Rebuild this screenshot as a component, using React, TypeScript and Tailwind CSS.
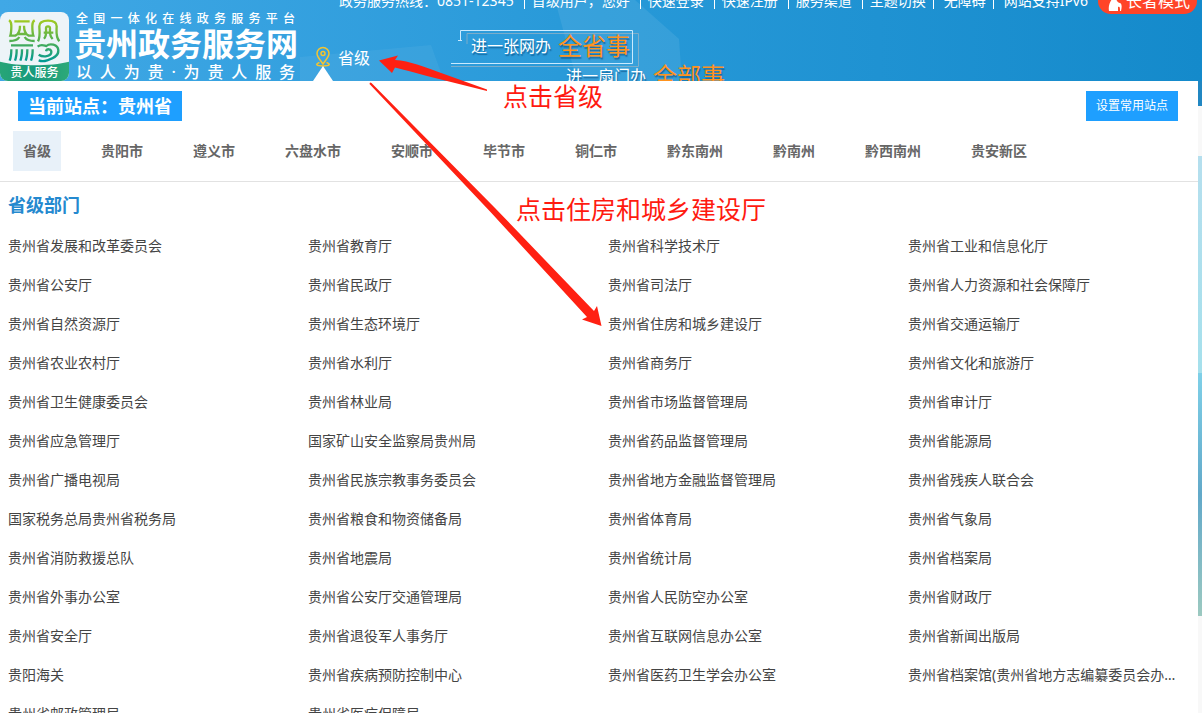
import React, { useState } from 'react';
import clsx from 'clsx';

interface NavItem {
    label: string;
    divider: string;
}

const navItems: NavItem[] = [
    { label: '政务服务热线：0851-12345', divider: 'ml-[10px] mr-[7px]' },
    { label: '首级用户，您好', divider: 'ml-[10px] mr-[7px]' },
    { label: '快速登录', divider: 'ml-[10px] mr-[7px]' },
    { label: '快速注册', divider: 'ml-[10px] mr-[7px]' },
    { label: '服务渠道', divider: 'ml-[10px] mr-[7px]' },
    { label: '主题切换', divider: 'ml-[7px] mr-[10px]' },
    { label: '无障碍', divider: 'ml-[7px] mr-[10px]' },
];

const regions = ['省级', '贵阳市', '遵义市', '六盘水市', '安顺市', '毕节市', '铜仁市', '黔东南州', '黔南州', '黔西南州', '贵安新区'];

const departments = [
    '贵州省发展和改革委员会', '贵州省教育厅', '贵州省科学技术厅', '贵州省工业和信息化厅',
    '贵州省公安厅', '贵州省民政厅', '贵州省司法厅', '贵州省人力资源和社会保障厅',
    '贵州省自然资源厅', '贵州省生态环境厅', '贵州省住房和城乡建设厅', '贵州省交通运输厅',
    '贵州省农业农村厅', '贵州省水利厅', '贵州省商务厅', '贵州省文化和旅游厅',
    '贵州省卫生健康委员会', '贵州省林业局', '贵州省市场监督管理局', '贵州省审计厅',
    '贵州省应急管理厅', '国家矿山安全监察局贵州局', '贵州省药品监督管理局', '贵州省能源局',
    '贵州省广播电视局', '贵州省民族宗教事务委员会', '贵州省地方金融监督管理局', '贵州省残疾人联合会',
    '国家税务总局贵州省税务局', '贵州省粮食和物资储备局', '贵州省体育局', '贵州省气象局',
    '贵州省消防救援总队', '贵州省地震局', '贵州省统计局', '贵州省档案局',
    '贵州省外事办公室', '贵州省公安厅交通管理局', '贵州省人民防空办公室', '贵州省财政厅',
    '贵州省安全厅', '贵州省退役军人事务厅', '贵州省互联网信息办公室', '贵州省新闻出版局',
    '贵阳海关', '贵州省疾病预防控制中心', '贵州省医药卫生学会办公室', '贵州省档案馆(贵州省地方志编纂委员会办公室)',
    '贵州省邮政管理局', '贵州省医疗保障局',
];

function Logo() {
    return (
        <div className="relative h-[69px] w-[69px] shrink-0 overflow-hidden rounded-lg bg-[#edf4f8]">
            <svg viewBox="0 0 207 207" className="h-full w-full" fill="none" aria-hidden="true">
                <defs>
                    <linearGradient id="mark" x1="0" y1="20" x2="0" y2="148" gradientUnits="userSpaceOnUse">
                        <stop offset="0" stopColor="#a6cc1f" />
                        <stop offset="0.5" stopColor="#55b04f" />
                        <stop offset="1" stopColor="#009a94" />
                    </linearGradient>
                    <linearGradient id="band" x1="0" y1="0" x2="1" y2="0">
                        <stop offset="0" stopColor="#27a577" />
                        <stop offset="0.5" stopColor="#189a7d" />
                        <stop offset="1" stopColor="#2da978" />
                    </linearGradient>
                </defs>
                <g stroke="url(#mark)" strokeWidth="7">
                    <path d="M27 25c5 3 7 8 7 16 0 12 0 20-3 30h15c10-5 14-14 14-30M104 25c-5 3-7 8-7 16 0 12 0 20 3 30H86c-10-5-14-14-14-30M43 28h46M54 66h24" />
                    <path d="M58 75c-5 9-15 12-30 12M74 75c5 9 15 12 30 12M33 100h66" />
                    <path d="M34 112c0 14-1 24-5 34M50 112c0 14-1 24-5 34M66 112c0 14-1 24-5 34M82 112c0 14-1 24-5 34M98 112c0 14-1 24-5 34" />
                    <path d="M114 88c8-15 4-32 4-45 0-12 9-17 26-17s26 5 26 17c0 13-4 30 8 45M132 80c9-10 6-21 6-31 0-8 12-8 12 0 0 10-3 21 8 32M131 62h29" />
                    <path d="M113 104c10-9 18-4 26-2 10-9 35-6 36 13 1 20-22 26-34 30-8 3-17 3-25 0M116 128c14 9 38 5 38-8 0-10-14-11-16-2" />
                </g>
                <path d="M0 149c55 14 152 14 207 0v58H0z" fill="url(#band)" />
            </svg>
            <span className="absolute inset-x-0 bottom-0 text-center text-xs leading-4 font-medium text-white">贵人服务</span>
        </div>
    );
}

function Brand() {
    return (
        <div className="flex w-[300px] shrink-0 gap-[7px] pt-3">
            <Logo />
            <div className="w-[219px] text-white">
                <p className="text-xs leading-[14px] font-medium [text-align-last:justify]">全国一体化在线政务服务平台</p>
                <h1 className="-mx-0.5 text-[32px] leading-9 font-bold whitespace-nowrap">贵州政务服务网</h1>
                <p className="text-base leading-5 font-medium [text-align-last:justify]">以人为贵·为贵人服务</p>
            </div>
        </div>
    );
}

function TopNav() {
    return (
        <nav className="-mt-3 flex h-[26px] items-center justify-end pr-[5px] text-sm whitespace-nowrap text-white">
            {navItems.map(item => (
                <React.Fragment key={item.label}>
                    <a href="#">{item.label}</a>
                    <span className={clsx('h-4 w-px bg-white', item.divider)} />
                </React.Fragment>
            ))}
            <a href="#">网站支持IPv6</a>
            <button type="button" className="ml-[10px] flex h-[26px] w-[99px] shrink-0 items-center gap-1 rounded-full bg-[#ff4428] pl-[10px] text-base">
                <svg viewBox="0 0 14 20" className="h-5 w-[14px]" fill="currentColor" aria-hidden="true">
                    <circle cx="6" cy="6" r="3" />
                    <path d="M1 20c-1-5 1-9 3-12h4c1 2 2 4 4 4 2 1 2 4 1 8h-1c0-3 0-5-2-4v4z" />
                </svg>
                长者模式
            </button>
        </nav>
    );
}

function Slogan() {
    return (
        <div className="relative ml-[80px] pt-[18px] text-white [text-shadow:1px_2px_1px_rgba(0,60,110,0.5)]">
            <svg viewBox="0 0 190 40" className="absolute top-[15px] left-0 h-10 w-[190px]" fill="none" aria-hidden="true">
                <path d="M16 15V4.500h171.500v33H0" stroke="#8fb0c4" strokeOpacity="0.8" />
                <path d="M7 11.500h4M9.500 11V1.500h172v33H0" stroke="#c9eaff" />
            </svg>
            <p className="flex items-center pl-5 leading-7">
                <span className="text-base">进一张网办</span>
                <strong className="ml-[7px] text-2xl leading-7 font-normal text-[#ff931e]">全省事</strong>
            </p>
            <p className="flex items-center pt-0.5 pl-[115px] leading-7">
                <span className="text-base">进一扇门办</span>
                <strong className="ml-[7px] text-2xl leading-7 font-normal text-[#ff931e]">全部事</strong>
            </p>
        </div>
    );
}

function Header() {
    return (
        <header className="relative flex h-[81px] overflow-hidden bg-linear-to-r from-[#40a8e6] via-[#2799d8] to-[#148acb]">
            <svg viewBox="0 0 720 81" className="absolute top-0 left-0 h-[81px] w-[720px]" fill="#fff" aria-hidden="true">
                <path d="M555 0h80l44 39 3 42H577z" fillOpacity="0.08" />
                <path d="M300 57l131-12 13 36H300z" fillOpacity="0.05" />
            </svg>
            <div className="relative flex w-full">
                <Brand />
                <div className="min-w-0 flex-1">
                    <TopNav />
                    <div className="flex pl-[13px]">
                        <a href="#" className="flex h-[67px] w-[58px] shrink-0 gap-[5px] pt-8 text-base leading-6 text-white">
                            <span className="relative flex w-5 justify-center">
                                <svg viewBox="0 0 16 22" className="h-[22px] w-4" fill="none" stroke="#f4c430" strokeWidth="1.500" aria-hidden="true">
                                    <path d="M8 18C5 13.500 2 11 2 7.500a6 6 0 0 1 12 0C14 11 11 13.500 8 18z" />
                                    <circle cx="8" cy="7.500" r="2" />
                                    <path d="M4.500 16.500C0 18 1 20 8 20s8-2 3.500-3.500" />
                                </svg>
                                <svg viewBox="0 0 20 15" className="absolute bottom-0 left-0 h-[15px] w-5" fill="#fff" aria-hidden="true">
                                    <path d="M10 0l10 15H0z" />
                                </svg>
                            </span>
                            <span className="whitespace-nowrap">省级</span>
                        </a>
                        <Slogan />
                    </div>
                </div>
            </div>
        </header>
    );
}

// Setas e textos de orientação sobre a página
function Guide() {
    return (
        <div className="pointer-events-none absolute inset-0 text-[25px] leading-8 whitespace-nowrap text-[#ff1a10]">
            <svg viewBox="0 0 620 340" className="absolute top-0 left-0 h-[340px] w-[620px]" fill="#ff2012" aria-hidden="true">
                <path d="M379 60.500L398 55.500 395 60C410 61 425 67 437 71.500L487 89.500V91L427 76C416 73 405 70 395 67.500L392 73z" />
                <path d="M370 82.500L371.500 83 495 208 594 311 597 306 601.500 326 582 319.500 587 317 490.500 212 369.500 84z" />
            </svg>
            <p className="absolute top-[80px] left-[503px]">点击省级</p>
            <p className="absolute top-[193px] left-[516px]">点击住房和城乡建设厅</p>
        </div>
    );
}

function App() {
    const [region, setRegion] = useState('省级');

    return (
        <div className="relative flex h-screen flex-col overflow-hidden bg-white font-['Noto_Sans','Noto_Sans_CJK_SC',sans-serif]">
            <Header />

            <div className="flex min-h-0 flex-1">
                <main className="min-w-0 flex-1 overflow-hidden bg-white pt-[10px]">
                    <div className="flex items-center justify-between pr-5 pl-[18px]">
                        <h2 className="bg-[#1e9fff] px-[10px] text-lg leading-[30px] font-bold text-white">当前站点：贵州省</h2>
                        <button type="button" className="bg-[#1e9fff] px-[10px] text-xs leading-[30px] text-white">设置常用站点</button>
                    </div>

                    <div className="mt-[10px] flex gap-[30px] border-b border-[#e2e2e2] pb-[10px] pl-[13px]">
                        {regions.map(name => (
                            <button
                                key={name}
                                type="button"
                                onClick={() => setRegion(name)}
                                className={clsx(
                                    'px-[10px] text-sm leading-10 font-bold whitespace-nowrap text-[#666]',
                                    region === name && 'bg-[#e8f1f9]'
                                )}
                            >
                                {name}
                            </button>
                        ))}
                    </div>

                    <h3 className="mt-[7px] pl-2 text-lg leading-8 font-bold text-[#2489cf]">省级部门</h3>

                    <ul className="mt-[5px] -mr-[10px] ml-2 grid grid-cols-4">
                        {departments.map(name => (
                            <li key={name} className="truncate pr-[30px] text-sm leading-[39px] text-[#444]">
                                <a href="#">{name}</a>
                            </li>
                        ))}
                    </ul>
                </main>

                {/* Faixa da página que fica atrás do painel */}
                <div className="w-1 shrink-0 bg-[#f8f8f8]">
                    <div className="h-[25px] bg-[#2187c2]" />
                    <div className="mt-[50px] h-[217px] bg-linear-to-b from-[#b5dfee] to-[#a5e0ec]" />
                    <div className="h-[243px] bg-linear-to-b from-[#7fd0e8] via-[#62a9c9] to-[#9cc9c0]" />
                </div>
            </div>

            <Guide />
        </div>
    );
}

export default App;
